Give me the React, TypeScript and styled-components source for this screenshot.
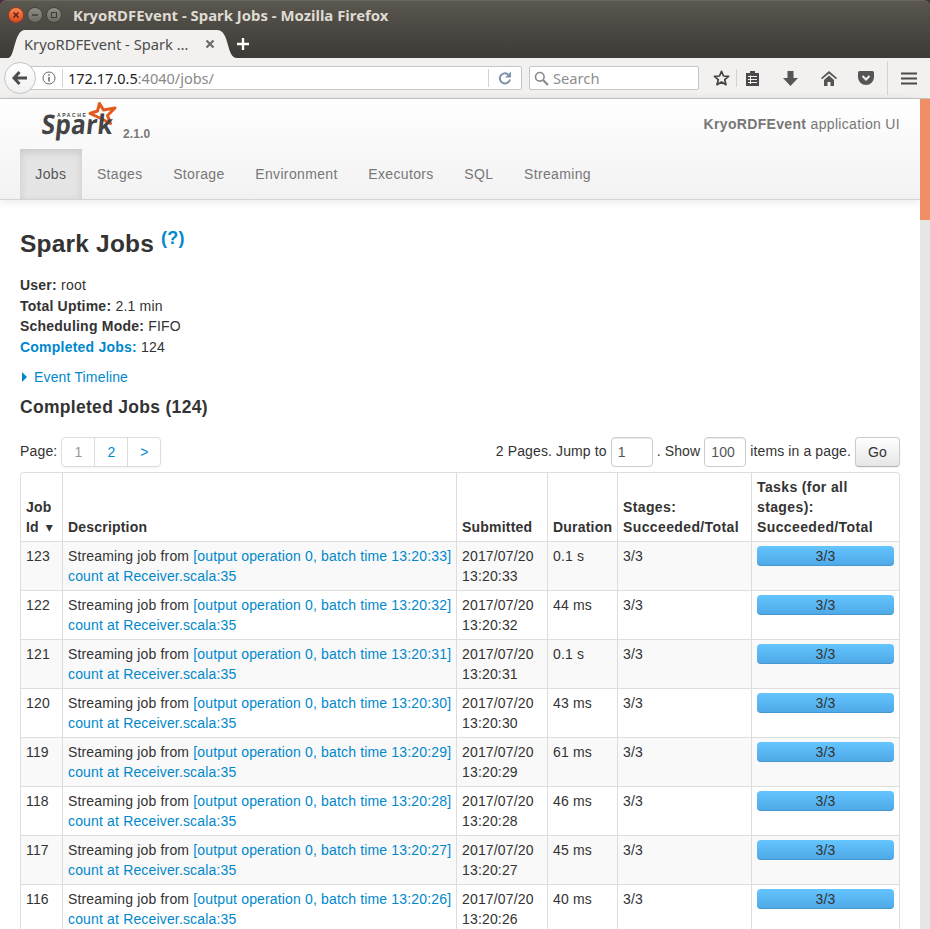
import * as React from 'react';
import styled, {createGlobalStyle} from 'styled-components';

const Global = createGlobalStyle`
  html, body {
    margin: 0;
    padding: 0;
    height: 929px;
    overflow: hidden;
    background: #fff;
    font-family: "Liberation Sans", Arial, sans-serif;
    font-size: 14px;
    line-height: 20px;
    letter-spacing: 0.16px;
    color: #333;
  }
  a {
    color: #0088cc;
    text-decoration: none;
  }
`;

const Window = styled.div`
  width: 930px;
  height: 929px;
  display: flex;
  flex-direction: column;
  overflow: hidden;
  background: #4a2a3f;
`;

const TitleBar = styled.div`
  height: 29px;
  flex: none;
  display: flex;
  align-items: center;
  padding-left: 8px;
  background: linear-gradient(#5a574f, #4a4842);
  border-radius: 6px 6px 0 0;
  border-top: 1px solid #6a675f;
  box-sizing: border-box;
  letter-spacing: 0;
`;

const WindowButton = styled.span<{$close?: boolean}>`
  width: 16px;
  height: 16px;
  margin-right: 3px;
  border-radius: 50%;
  display: flex;
  align-items: center;
  justify-content: center;
  box-sizing: border-box;
  background: ${p => (p.$close ? 'linear-gradient(#f5875a, #dd4a1e)' : 'linear-gradient(#8f8c84, #6c6a63)')};
  border: 1px solid ${p => (p.$close ? '#a63a16' : '#44423d')};
`;

const WindowTitle = styled.span`
  margin-left: 8px;
  font-family: "Noto Sans", sans-serif;
  font-size: 14.9px;
  font-weight: 700;
  color: #dfdbd2;
  white-space: nowrap;
`;

const TabStrip = styled.div`
  height: 29px;
  flex: none;
  display: flex;
  align-items: flex-end;
  padding-left: 8px;
  background: linear-gradient(#4a4842, #3c3b37);
  letter-spacing: 0;
`;

const Tab = styled.div`
  width: 229px;
  height: 28px;
  box-sizing: border-box;
  display: flex;
  align-items: center;
  justify-content: space-between;
  padding: 0 22px 0 16px;
  background: #f2f1ef;
  clip-path: path('M0 28 C7 28 6 0 17 0 H209 C222 0 218 28 229 28 Z');
  font-family: "Noto Sans", sans-serif;
  font-size: 14.7px;
  color: #4c4c4c;
  white-space: nowrap;
`;

const NewTab = styled.span`
  margin-left: -1px;
  height: 28px;
  display: flex;
  align-items: center;
`;

const Toolbar = styled.div`
  height: 41px;
  flex: none;
  box-sizing: border-box;
  display: flex;
  align-items: center;
  padding-left: 4px;
  background: #f2f1ef;
  border-bottom: 1px solid #c9c6c1;
  letter-spacing: 0;
`;

const BackButton = styled.span`
  width: 32px;
  height: 32px;
  flex: none;
  box-sizing: border-box;
  display: flex;
  align-items: center;
  justify-content: center;
  border-radius: 50%;
  border: 1px solid #c4c4c4;
  background: linear-gradient(#fff, #f1f1f1);
  position: relative;
  z-index: 1;
`;

const UrlBar = styled.div`
  width: 502px;
  height: 24px;
  margin-left: -16px;
  box-sizing: border-box;
  display: flex;
  align-items: center;
  padding-left: 21px;
  background: #fff;
  border: 1px solid #c6c6c6;
  border-radius: 2px;
  font-family: "Noto Sans", sans-serif;
  font-size: 14.5px;
  white-space: nowrap;
`;

const UrlDivider = styled.span`
  flex: none;
  width: 1px;
  height: 18px;
  margin: 0 5px 0 6px;
  background: #d4d2ce;
`;

const UrlHost = styled.span`
  color: #222;
`;

const UrlRest = styled.span`
  color: #8a8a8a;
`;

const ReloadSlot = styled.span`
  margin-left: auto;
  width: 33px;
  height: 18px;
  box-sizing: border-box;
  display: flex;
  align-items: center;
  justify-content: center;
  border-left: 1px solid #d4d2ce;
`;

const BarSeparator = styled.span<{$tall?: boolean}>`
  flex: none;
  width: 1px;
  height: ${p => (p.$tall ? 34 : 18)}px;
  background: #d4d2ce;
`;

const SearchBar = styled.div`
  width: 170px;
  height: 24px;
  margin: 0 7px;
  box-sizing: border-box;
  display: flex;
  align-items: center;
  gap: 4px;
  padding-left: 4px;
  background: #fff;
  border: 1px solid #c6c6c6;
  border-radius: 2px;
  font-family: "Noto Sans", sans-serif;
  font-size: 14.7px;
  color: #8e8e8e;
`;

const ToolIcon = styled.span<{$w: number}>`
  flex: none;
  width: ${p => p.$w}px;
  display: flex;
  align-items: center;
  justify-content: center;
`;

const Viewport = styled.div`
  flex: 1;
  min-height: 0;
  display: flex;
  background: #fff;
`;

const Page = styled.div`
  width: 920px;
  flex: none;
`;

const ScrollTrack = styled.div`
  width: 10px;
  flex: none;
  background: #e6e6e6;
`;

const ScrollThumb = styled.div`
  height: 121px;
  background: #f08e66;
`;

const Navbar = styled.div`
  height: 101px;
  box-sizing: border-box;
  background: linear-gradient(#ffffff, #f2f2f2);
  border-bottom: 1px solid #d4d4d4;
  box-shadow: 0 1px 10px rgba(0, 0, 0, 0.1);
`;

const BrandRow = styled.div`
  height: 50px;
  display: flex;
  align-items: flex-start;
  padding: 0 20px 0 38px;
`;

const Version = styled.span`
  margin-top: 25px;
  font-size: 11.9px;
  font-weight: 700;
  color: #777;
`;

const AppName = styled.span`
  margin: 15px 0 0 auto;
  color: #777;
  letter-spacing: 0.33px;
`;

const NavList = styled.div`
  height: 50px;
  display: flex;
  padding-left: 20px;
`;

const NavItem = styled.span<{$active?: boolean}>`
  padding: 15px 15.3px;
  letter-spacing: 0.35px;
  color: ${p => (p.$active ? '#555' : '#777')};
  background: ${p => (p.$active ? '#e5e5e5' : 'transparent')};
  box-shadow: ${p => (p.$active ? 'inset 0 3px 8px rgba(0, 0, 0, 0.125)' : 'none')};
`;

const Content = styled.div`
  padding: 24px 20px 0;
`;

const Heading = styled.h3`
  margin: 0;
  font-size: 24.5px;
  line-height: 40px;
  font-weight: 700;
  letter-spacing: 0.2px;
  white-space: nowrap;
`;

const Help = styled.sup`
  font-size: 18px;
  line-height: 0;
  position: relative;
  top: 1px;
`;

const SummaryList = styled.ul`
  list-style: none;
  margin: 11px 0 0;
  padding: 0;
  line-height: 20.6px;
  letter-spacing: 0.22px;
`;

const Timeline = styled.div`
  margin-top: 10px;
  display: flex;
  align-items: center;
  color: #0088cc;
`;

const Caret = styled.span`
  width: 0;
  height: 0;
  margin: 0 7px 0 2px;
  border-left: 5px solid #0088cc;
  border-top: 5px solid transparent;
  border-bottom: 5px solid transparent;
`;

const SubHeading = styled.h4`
  margin: 10px 0 0;
  font-size: 17.5px;
  line-height: 20px;
  font-weight: 700;
  letter-spacing: 0.3px;
`;

const PagingRow = styled.div`
  margin-top: 20px;
  height: 30px;
  display: flex;
  align-items: center;
`;

const PagingLabel = styled.span`
  padding-bottom: 2px;
`;

const Pager = styled.div`
  display: flex;
  margin-left: 4px;
  height: 30px;
  box-sizing: border-box;
  border: 1px solid #ddd;
  border-radius: 4px;
  box-shadow: 0 1px 2px rgba(0, 0, 0, 0.05);
`;

const PagerCell = styled.span<{$current?: boolean}>`
  width: 32px;
  display: flex;
  align-items: center;
  justify-content: center;
  color: ${p => (p.$current ? '#999' : '#0088cc')};
  & + & {
    border-left: 1px solid #ddd;
  }
`;

const JumpForm = styled.div`
  margin-left: auto;
  display: flex;
  align-items: center;
  white-space: pre;
  letter-spacing: 0.12px;
`;

const FieldBox = styled.span<{$w: number}>`
  width: ${p => p.$w}px;
  height: 30px;
  box-sizing: border-box;
  margin: 0 4px;
  padding-left: 6px;
  display: flex;
  align-items: center;
  color: #555;
  border: 1px solid #ccc;
  border-radius: 4px;
  box-shadow: inset 0 1px 1px rgba(0, 0, 0, 0.075);
`;

const GoButton = styled.span`
  width: 45px;
  height: 30px;
  box-sizing: border-box;
  margin-left: 4px;
  display: flex;
  align-items: center;
  justify-content: center;
  border: 1px solid #ccc;
  border-bottom-color: #b3b3b3;
  border-radius: 4px;
  background: linear-gradient(#ffffff, #e6e6e6);
  box-shadow: inset 0 1px 0 rgba(255, 255, 255, 0.2), 0 1px 2px rgba(0, 0, 0, 0.05);
`;

const JobsTable = styled.table`
  margin-top: 5px;
  width: 880px;
  table-layout: fixed;
  border-collapse: separate;
  border-spacing: 0;
  border: 1px solid #ddd;
  border-left: 0;
  border-radius: 4px;
`;

const HeadCell = styled.th<{$w: number; $wide?: boolean}>`
  width: ${p => p.$w}px;
  box-sizing: border-box;
  padding: 4px 5px;
  text-align: left;
  vertical-align: bottom;
  font-weight: 700;
  line-height: 20px;
  letter-spacing: ${p => (p.$wide ? 0.38 : 0.2)}px;
  border-left: 1px solid #ddd;
  &:first-child {
    border-top-left-radius: 4px;
  }
`;

const BodyCell = styled.td<{$odd: boolean}>`
  padding: 4px 5px;
  vertical-align: top;
  line-height: 20px;
  white-space: nowrap;
  border-left: 1px solid #ddd;
  border-top: 1px solid #ddd;
  background: ${p => (p.$odd ? '#f9f9f9' : '#fff')};
`;

const Progress = styled.div`
  height: 20px;
  text-align: center;
  border-radius: 4px;
  background: linear-gradient(#64c5ff, #4ea8e6);
  box-shadow: inset 0 -1px 0 rgba(0, 0, 0, 0.1);
`;

const SortMark = styled.span`
  display: inline-block;
  margin-left: 7px;
  font-family: "DejaVu Sans", sans-serif;
  font-size: 14px;
`;

const jobs = [
  {id: 123, sec: 33, duration: '0.1 s'},
  {id: 122, sec: 32, duration: '44 ms'},
  {id: 121, sec: 31, duration: '0.1 s'},
  {id: 120, sec: 30, duration: '43 ms'},
  {id: 119, sec: 29, duration: '61 ms'},
  {id: 118, sec: 28, duration: '46 ms'},
  {id: 117, sec: 27, duration: '45 ms'},
  {id: 116, sec: 26, duration: '40 ms'},
];

const SparkLogo = () => (
  <svg width="85" height="45" viewBox="0 0 85 45">
    <polygon
      points="61.5,4.5 65.5,11 77,9 69.5,16.500 72.5,24.500 62,19 52,14.500 59.5,12"
      fill="none"
      stroke="#e25a1c"
      strokeWidth="3"
      strokeLinejoin="round"
    />
    <text x="19" y="18" fontFamily="Liberation Sans" fontSize="5" fontWeight="700" fill="#444" textLength="29">APACHE</text>
    <text x="6.5" y="35" transform="skewX(-6)" fontFamily="Open Sans" fontSize="27" fontWeight="700" fill="#444" textLength="71" lengthAdjust="spacingAndGlyphs">Spark</text>
  </svg>
);

const App = () => (
  <Window>
    <Global />
    <TitleBar>
      <WindowButton $close>
        <svg width="8" height="8" viewBox="0 0 8 8"><path d="M1.5 1.5l5 5M6.5 1.5l-5 5" stroke="#5c1c08" strokeWidth="1.4" /></svg>
      </WindowButton>
      <WindowButton>
        <svg width="8" height="8" viewBox="0 0 8 8"><path d="M1 4h6" stroke="#3c3b37" strokeWidth="1.4" /></svg>
      </WindowButton>
      <WindowButton>
        <svg width="8" height="8" viewBox="0 0 8 8"><rect x="1.5" y="1.5" width="5" height="5" fill="none" stroke="#3c3b37" /></svg>
      </WindowButton>
      <WindowTitle>KryoRDFEvent - Spark Jobs - Mozilla Firefox</WindowTitle>
    </TitleBar>
    <TabStrip>
      <Tab>
        <span>KryoRDFEvent - Spark …</span>
        <svg width="10" height="10" viewBox="0 0 10 10"><path d="M1.5 1.5l7 7M8.5 1.5l-7 7" stroke="#6b6b6b" strokeWidth="2.2" /></svg>
      </Tab>
      <NewTab>
        <svg width="14" height="14" viewBox="0 0 14 14"><path d="M7 1v12M1 7h12" stroke="#fff" strokeWidth="2.4" /></svg>
      </NewTab>
    </TabStrip>
    <Toolbar>
      <BackButton>
        <svg width="16" height="14" viewBox="0 0 16 14"><path d="M7.5 1L2 7l5.500 6M2.500 7H15" fill="none" stroke="#4d4d4d" strokeWidth="3" /></svg>
      </BackButton>
      <UrlBar>
        <svg width="14" height="14" viewBox="0 0 14 14"><circle cx="7" cy="7" r="6" fill="none" stroke="#666" /><path d="M7 6v4.500M7 3.200v1.600" stroke="#666" strokeWidth="1.500" /></svg>
        <UrlDivider />
        <UrlHost>172.17.0.5</UrlHost>
        <UrlRest>:4040/jobs/</UrlRest>
        <ReloadSlot>
          <svg width="14" height="14" viewBox="0 0 14 14"><path d="M12 8.500A5 5 0 112 6a5 5 0 018-2.500" fill="none" stroke="#7f93a8" strokeWidth="2" /><path d="M13 0.500V6.500H7z" fill="#7f93a8" /></svg>
        </ReloadSlot>
      </UrlBar>
      <SearchBar>
        <svg width="15" height="15" viewBox="0 0 15 15"><circle cx="5.800" cy="5.800" r="4.300" fill="none" stroke="#8a8a8a" strokeWidth="1.600" /><path d="M9 9l5 5" stroke="#8a8a8a" strokeWidth="2.200" /></svg>
        <span>Search</span>
      </SearchBar>
      <ToolIcon $w={30}>
        <svg width="17" height="16" viewBox="0 0 17 16"><polygon points="8.500,1.300 10.500,6 15.600,6.400 11.700,9.700 13,14.700 8.500,12 4,14.700 5.300,9.700 1.400,6.400 6.500,6" fill="none" stroke="#424242" strokeWidth="1.700" strokeLinejoin="round" /></svg>
      </ToolIcon>
      <BarSeparator />
      <ToolIcon $w={30}>
        <svg width="15" height="16" viewBox="0 0 15 16"><path d="M1 3h4V1h5v2h4v13H1z" fill="#4a4a4a" /><path d="M3 6.500h9M3 9.500h9M3 12.500h9M5.500 5.500v8.500" stroke="#f2f1ef" /></svg>
      </ToolIcon>
      <ToolIcon $w={46}>
        <svg width="15" height="15" viewBox="0 0 15 15"><path d="M4.500 0h6v7H15l-7.500 8L0 7h4.500z" fill="#555" /></svg>
      </ToolIcon>
      <ToolIcon $w={31}>
        <svg width="16" height="15" viewBox="0 0 16 15"><path d="M8 0l8 7-1 1.300L8 2.500 1 8.300 0 7zM3 9l5-4.500L13 9v6H9.500v-4h-3v4H3z" fill="#555" /></svg>
      </ToolIcon>
      <ToolIcon $w={43}>
        <svg width="16" height="14" viewBox="0 0 16 14"><path d="M1.500 0h13A1.500 1.500 0 0116 1.500V6a8 8 0 01-16 0V1.500A1.500 1.500 0 011.500 0z" fill="#555" /><path d="M4.500 5L8 8.500 11.500 5" fill="none" stroke="#f2f1ef" strokeWidth="2" /></svg>
      </ToolIcon>
      <BarSeparator $tall />
      <ToolIcon $w={42}>
        <svg width="16" height="13" viewBox="0 0 16 13"><path d="M0 1.500h16M0 6.500h16M0 11.500h16" stroke="#4a4a4a" strokeWidth="2.200" /></svg>
      </ToolIcon>
    </Toolbar>
    <Viewport>
      <Page>
        <Navbar>
          <BrandRow>
            <SparkLogo />
            <Version>2.1.0</Version>
            <AppName><strong>KryoRDFEvent</strong> application UI</AppName>
          </BrandRow>
          <NavList>
            <NavItem $active>Jobs</NavItem>
            <NavItem>Stages</NavItem>
            <NavItem>Storage</NavItem>
            <NavItem>Environment</NavItem>
            <NavItem>Executors</NavItem>
            <NavItem>SQL</NavItem>
            <NavItem>Streaming</NavItem>
          </NavList>
        </Navbar>
        <Content>
          <Heading>Spark Jobs <Help><a href="#help">(?)</a></Help></Heading>
          <SummaryList>
            <li><strong>User:</strong> root</li>
            <li><strong>Total Uptime:</strong> 2.1 min</li>
            <li><strong>Scheduling Mode:</strong> FIFO</li>
            <li><a href="#completed"><strong>Completed Jobs:</strong></a> 124</li>
          </SummaryList>
          <Timeline><Caret />Event Timeline</Timeline>
          <SubHeading>Completed Jobs (124)</SubHeading>
          <PagingRow>
            <PagingLabel>Page:</PagingLabel>
            <Pager>
              <PagerCell $current>1</PagerCell>
              <PagerCell>2</PagerCell>
              <PagerCell>&gt;</PagerCell>
            </Pager>
            <JumpForm>
              <PagingLabel>2 Pages. Jump to</PagingLabel>
              <FieldBox $w={42}>1</FieldBox>
              <PagingLabel>. Show</PagingLabel>
              <FieldBox $w={42}>100</FieldBox>
              <PagingLabel>items in a page.</PagingLabel>
              <GoButton>Go</GoButton>
            </JumpForm>
          </PagingRow>
          <JobsTable>
            <thead>
              <tr>
                <HeadCell $w={42}>Job<br />Id<SortMark>▾</SortMark></HeadCell>
                <HeadCell $w={394}>Description</HeadCell>
                <HeadCell $w={91}>Submitted</HeadCell>
                <HeadCell $w={70}>Duration</HeadCell>
                <HeadCell $w={134} $wide>Stages: Succeeded/Total</HeadCell>
                <HeadCell $w={148} $wide>Tasks (for all stages): Succeeded/Total</HeadCell>
              </tr>
            </thead>
            <tbody>
              {jobs.map((job, i) => (
                <tr key={job.id}>
                  <BodyCell $odd={i % 2 === 0}>{job.id}</BodyCell>
                  <BodyCell $odd={i % 2 === 0}>
                    Streaming job from <a href="#job">[output operation 0, batch time 13:20:{job.sec}]</a>
                    <br />
                    <a href="#job">count at Receiver.scala:35</a>
                  </BodyCell>
                  <BodyCell $odd={i % 2 === 0}>2017/07/20<br />13:20:{job.sec}</BodyCell>
                  <BodyCell $odd={i % 2 === 0}>{job.duration}</BodyCell>
                  <BodyCell $odd={i % 2 === 0}>3/3</BodyCell>
                  <BodyCell $odd={i % 2 === 0}><Progress>3/3</Progress></BodyCell>
                </tr>
              ))}
            </tbody>
          </JobsTable>
        </Content>
      </Page>
      <ScrollTrack><ScrollThumb /></ScrollTrack>
    </Viewport>
  </Window>
);

export default App;
